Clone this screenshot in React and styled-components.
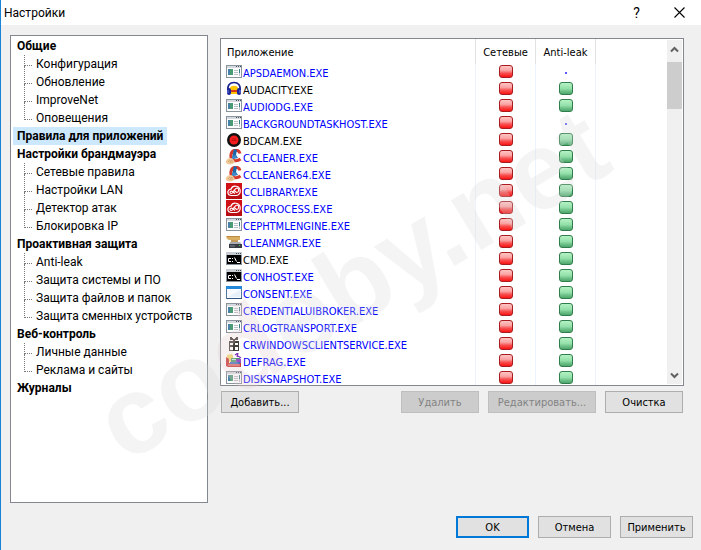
import React from 'react';
import styled, { createGlobalStyle, css } from 'styled-components';

const GlobalStyle = createGlobalStyle`
  * {
    box-sizing: border-box;
  }
  body {
    margin: 0;
    background: #f0f0f0;
  }
`;

const uiFont = 'Roboto, "Open Sans", sans-serif';
const smallFont = '"DejaVu Sans Condensed", "DejaVu Sans", sans-serif';

const Dialog = styled.div`
  position: relative;
  display: flex;
  flex-direction: column;
  height: 100vh;
  min-height: 400px;
  overflow: hidden;
  background: #f0f0f0;
  border-left: 1px solid #1883d7;
  color: #000;
  font-family: ${uiFont};
  font-size: 12px;
`;

const TitleBar = styled.header`
  display: flex;
  align-items: center;
  height: 25px;
  flex: none;
  padding-left: 3px;
  background: #fff;
`;

const Title = styled.h1`
  flex: 1;
  margin: 0;
  font-size: 12px;
  font-weight: 400;
`;

const TitleButton = styled.button`
  display: flex;
  align-items: center;
  justify-content: center;
  width: 43px;
  height: 25px;
  padding: 0;
  border: 0;
  background: none;
  font-family: ${uiFont};
  font-size: 14px;
`;

const Body = styled.main`
  display: flex;
  flex: 1;
  min-height: 0;
  gap: 12px;
  padding: 10px 17px 0 9px;
`;

const Tree = styled.nav`
  flex: none;
  width: 198px;
  padding: 1px 2px;
  background: #fff;
  border: 1px solid #828790;
`;

const List = styled.ul`
  margin: 0;
  padding: 0;
  list-style: none;
`;

const TreeLink = styled.a`
  display: inline-block;
  height: 18px;
  padding: 0 4px;
  line-height: 18px;
  color: #000;
  text-decoration: none;
  white-space: nowrap;
  vertical-align: top;
  ${({ $group }) => $group && css`font-weight: 700;`}
  ${({ $active }) => $active && css`background: #cce8ff;`}
`;

const Child = styled.li`
  display: flex;
  height: 18px;
  padding-left: 11px;
`;

const Group = styled.li`
  line-height: 18px;
`;

const Branch = styled.span`
  width: 8px;
  height: 18px;
  &::before,
  &::after {
    content: '';
    display: block;
    height: 10px;
    border-left: 1px dotted #777;
  }
  &::before {
    border-bottom: 1px dotted #777;
  }
  &::after {
    height: 8px;
    ${({ $last }) => $last && css`border-left: 0;`}
  }
`;

const Content = styled.section`
  display: flex;
  flex-direction: column;
  flex: 1;
  min-width: 0;
  padding: 3px 0 90px;
  font-family: ${smallFont};
  font-size: 11px;
`;

const ListBox = styled.div`
  display: flex;
  flex: 1;
  min-height: 0;
  background: #fff;
  border: 1px solid #828790;
  overflow: hidden;
`;

const TableWrap = styled.div`
  flex: 1;
  overflow: hidden;
`;

const Table = styled.table`
  width: 100%;
  table-layout: fixed;
  border-collapse: separate;
  border-spacing: 0;
`;

const HeadCell = styled.th`
  width: ${({ $width }) => $width || 'auto'};
  height: 25px;
  padding: ${({ $center }) => ($center ? '2px 0 0' : '2px 6px 0')};
  font-weight: 400;
  text-align: ${({ $center }) => ($center ? 'center' : 'left')};
  border-right: ${({ $width }) => ($width ? '1px solid #e2e2e2' : '0')};
`;

const Cell = styled.td`
  height: 17px;
  padding: 0;
  border-right: ${({ $last }) => ($last ? '0' : '1px solid #ebf4fe')};
`;

const AppName = styled.div`
  display: flex;
  gap: 1px;
  height: 17px;
  padding-left: 5px;
  line-height: 20px;
  color: ${({ $plain }) => ($plain ? '#000' : '#0000ff')};
  white-space: nowrap;
`;

const AppIcon = styled.svg`
  flex: none;
  width: 16px;
  height: 16px;
`;

const Status = styled.div`
  display: flex;
  align-items: center;
  justify-content: center;
  height: 17px;
`;

const Light = styled.span`
  width: 14px;
  height: 13px;
  margin-bottom: 2px;
  border: 1px solid ${({ $red }) => ($red ? '#a81c20' : '#2f7d4a')};
  border-radius: 3px;
  background: ${({ $red }) =>
    $red
      ? 'linear-gradient(#ffc4c4, #fba3a3 40%, #f85050 65%, #fa1414)'
      : 'linear-gradient(#b4f2c4, #94e0aa 50%, #6cc088 75%, #4ea76c)'};
`;

const Dot = styled.span`
  width: 2px;
  height: 2px;
  background: #5a5aff;
`;

const ScrollBar = styled.div`
  display: flex;
  flex-direction: column;
  flex: none;
  width: 15px;
  margin: 1px;
  background: #f0f0f0;
`;

const ScrollButton = styled.button`
  display: flex;
  align-items: center;
  justify-content: center;
  height: 18px;
  padding: 0;
  border: 0;
  background: none;
`;

const Track = styled.div`
  flex: 1;
  padding-top: 4px;
`;

const Thumb = styled.div`
  height: 47px;
  background: #cdcdcd;
`;

const Actions = styled.div`
  display: flex;
  gap: 9px;
  padding: 5px 1px 0;
`;

const Button = styled.button`
  width: ${({ $width }) => $width || '78px'};
  height: 22px;
  padding: 0;
  border: 1px solid #adadad;
  background: #e1e1e1;
  color: #000;
  font-family: ${smallFont};
  font-size: 11px;
  ${({ $default }) => $default && css`border: 2px solid #0078d7;`}
  ${({ $push }) => $push && css`margin-left: auto;`}
  &:disabled {
    border-color: #bfbfbf;
    background: #ccc;
    color: #838383;
  }
`;

const Footer = styled.footer`
  display: flex;
  flex: none;
  justify-content: flex-end;
  gap: 9px;
  padding: 13px 8px 12px;
`;

const Watermark = styled.div`
  position: absolute;
  left: 50%;
  top: 284px;
  transform: translate(-50%, -50%) rotate(-31deg);
  color: rgba(216, 216, 216, 0.28);
  font-family: 'Liberation Sans', sans-serif;
  font-size: 110px;
  font-weight: 700;
  line-height: 1;
  pointer-events: none;
  user-select: none;
`;

const Tinted = styled.span`
  color: rgba(226, 200, 204, 0.28);
`;

const WindowArt = () => (
  <>
    <rect x="0.5" y="1.5" width="15" height="12" fill="#fff" stroke="#8a929c" />
    <rect x="1" y="2" width="14" height="2" fill="#d5dae0" />
    <path d="M10 2h1v1h-1zM12 2h1v1h-1zM14 2h1v1h-1z" fill="#44525f" />
    <rect x="2" y="5" width="5" height="6" fill="#4b9b77" />
    <rect x="2" y="5" width="2" height="6" fill="#4682a8" />
    <path d="M8 6h4v1H8zM8 8h4v1H8zM8 10h4v1H8z" fill="#b9c0c7" />
    <rect x="13" y="5" width="1" height="4" fill="#337f86" />
    <rect x="13" y="9" width="1" height="3" fill="#b9c0c7" />
  </>
);

const AudacityArt = () => (
  <>
    <path d="M2 10C1 4 4 1.500 8 1.500S15 4 14 10" fill="none" stroke="#17208c" strokeWidth="1.600" />
    <path d="M4 7c1-3 7-3 8 0v6H4z" fill="#ffc400" />
    <path d="M4 9h8v2H4z" fill="#f06a10" />
    <path d="M4 10l1-1 1 2 1-2 1 2 1-2 1 2 1-2 1 1" fill="none" stroke="#c81818" strokeWidth="0.700" />
    <rect x="1" y="7" width="4" height="7" rx="2" fill="#1b249c" />
    <rect x="11" y="7" width="4" height="7" rx="2" fill="#1b249c" />
    <path d="M2 9v3M14 9v3" stroke="#7482df" />
  </>
);

const BandicamArt = () => (
  <>
    <circle cx="8" cy="8" r="7" fill="#111" />
    <circle cx="8" cy="8" r="4.500" fill="#f31d1d" />
    <path d="M5.500 8.500h5M6 7h4" stroke="#b01010" strokeWidth="0.800" />
  </>
);

const CCleanerArt = () => (
  <>
    <path d="M14 4.500C13 0 6 0 5 5.500c-1 6 5 8 9.500 4.500" fill="none" stroke="#d5392c" strokeWidth="3" />
    <path d="M8 0l3 1-1 5 2 3-6 1 1-6z" fill="#1b68a9" />
    <path d="M6 7l4-1 1 3-5 1z" fill="#3a89c6" />
    <path d="M0 12c1-3 5-4 7-2l2 3c-2 3-7 3-9 1z" fill="#f1c998" />
    <path d="M2 13l2-2M4 14l1-3M6 14V11" stroke="#c99a64" strokeWidth="0.700" />
  </>
);

const CreativeArt = () => (
  <>
    <rect width="16" height="16" fill="#d01217" />
    <path d="M0 11h16v5H0z" fill="#b80d12" />
    <path d="M5.500 12.500C1 12.500 0.500 6.500 5 6.200 6.500 1.500 14 2.500 14.200 8c.1 3-2 4.500-4.500 4.500z" fill="none" stroke="#fff" strokeWidth="1.200" />
    <path d="M9 10.500L6.500 8.500C4 7 3 10.500 5.500 10.500c2 0 3-5.500 5.500-5.500 2.500.2 2 4.500 0 4.500-1 0-2-1.500-3.500-2.500" fill="none" stroke="#fff" strokeWidth="1.100" />
  </>
);

const CleanArt = () => (
  <>
    <path d="M0 2h14v4H3L1 5z" fill="#d7ae62" />
    <path d="M1 2h13v1H1z" fill="#b88b40" />
    <path d="M5 6h7v3H5z" fill="#c39a58" />
    <path d="M4 8h10l2 3H3z" fill="#a9adb3" />
    <rect x="3" y="10" width="13" height="4" fill="#383c43" />
    <path d="M4 12h5" stroke="#7f868e" />
    <rect x="13" y="11" width="1" height="1" fill="#42d04d" />
  </>
);

const ConsoleArt = () => (
  <>
    <rect x="0.500" y="2.500" width="15" height="11" fill="#000" stroke="#8a929c" />
    <rect x="0" y="1" width="16" height="3" fill="#c6ccd2" />
    <path d="M10 2h1v1h-1zM12 2h1v1h-1zM14 2h1v1h-1z" fill="#44525f" />
    <path d="M5 7.500H2.500v3H5M6.500 7v1M6.500 10v1M8.500 6.500l2 4M11 11.500h3" fill="none" stroke="#fff" />
  </>
);

const ConsentArt = () => (
  <>
    <rect x="0.500" y="1.500" width="15" height="12" fill="#f7fbff" stroke="#55779f" />
    <rect x="0" y="1" width="16" height="3" fill="#2388da" />
    <path d="M1 13.500h15" stroke="#31537f" />
    <path d="M2 12L14 5v7z" fill="#e5f0f8" />
  </>
);

const GiftArt = () => (
  <>
    <path d="M4 1h2v1h1v1h2V2h1V1h2v3H9v1h4v10H3V5h4V4H4z" fill="#443e39" />
    <path d="M4 7h3v2H4zM9 7h3v2H9zM4 11h3v3H4zM9 11h3v3H9z" fill="#fff" />
  </>
);

const DefragArt = () => (
  <>
    <path d="M1 2l5-1 1 2v6H1z" fill="#f6d86a" />
    <path d="M9 2l3-2-1 4M12 3l3 2" stroke="#7d2bb5" strokeWidth="1.200" fill="none" />
    <path d="M5 5h9v5H5z" fill="#4a9b70" />
    <path d="M6 6h6v1H6z" fill="#c4f0d5" />
    <path d="M10 6h5v4h-5z" fill="#9853c6" />
    <path d="M0 4l3 2v4h12v4H2l-2-1z" fill="#c93636" />
    <path d="M4 9h10v2H4z" fill="#4874bd" />
    <path d="M2 12h12" stroke="#eda0a0" />
  </>
);

const art = {
  window: WindowArt,
  audacity: AudacityArt,
  bandicam: BandicamArt,
  ccleaner: CCleanerArt,
  creative: CreativeArt,
  clean: CleanArt,
  console: ConsoleArt,
  consent: ConsentArt,
  gift: GiftArt,
  defrag: DefragArt,
};

const groups = [
  { title: 'Общие', items: ['Конфигурация', 'Обновление', 'ImproveNet', 'Оповещения'] },
  { title: 'Правила для приложений', active: true, items: [] },
  { title: 'Настройки брандмауэра', items: ['Сетевые правила', 'Настройки LAN', 'Детектор атак', 'Блокировка IP'] },
  {
    title: 'Проактивная защита',
    items: ['Anti-leak', 'Защита системы и ПО', 'Защита файлов и папок', 'Защита сменных устройств'],
  },
  { title: 'Веб-контроль', items: ['Личные данные', 'Реклама и сайты'] },
  { title: 'Журналы', items: [] },
];

const apps = [
  { name: 'APSDAEMON.EXE', icon: 'window', noLeak: true },
  { name: 'AUDACITY.EXE', icon: 'audacity', plain: true },
  { name: 'AUDIODG.EXE', icon: 'window' },
  { name: 'BACKGROUNDTASKHOST.EXE', icon: 'window', noLeak: true },
  { name: 'BDCAM.EXE', icon: 'bandicam', plain: true },
  { name: 'CCLEANER.EXE', icon: 'ccleaner' },
  { name: 'CCLEANER64.EXE', icon: 'ccleaner' },
  { name: 'CCLIBRARY.EXE', icon: 'creative' },
  { name: 'CCXPROCESS.EXE', icon: 'creative' },
  { name: 'CEPHTMLENGINE.EXE', icon: 'window' },
  { name: 'CLEANMGR.EXE', icon: 'clean' },
  { name: 'CMD.EXE', icon: 'console', plain: true },
  { name: 'CONHOST.EXE', icon: 'console' },
  { name: 'CONSENT.EXE', icon: 'consent' },
  { name: 'CREDENTIALUIBROKER.EXE', icon: 'window' },
  { name: 'CRLOGTRANSPORT.EXE', icon: 'window' },
  { name: 'CRWINDOWSCLIENTSERVICE.EXE', icon: 'gift' },
  { name: 'DEFRAG.EXE', icon: 'defrag' },
  { name: 'DISKSNAPSHOT.EXE', icon: 'window' },
];

const AppRow = ({ app }) => {
  const Art = art[app.icon];
  return (
    <tr>
      <Cell>
        <AppName $plain={app.plain}>
          <AppIcon viewBox="0 0 16 16" aria-hidden="true">
            <Art />
          </AppIcon>
          {app.name}
        </AppName>
      </Cell>
      <Cell>
        <Status>
          <Light $red />
        </Status>
      </Cell>
      <Cell>
        <Status>{app.noLeak ? <Dot /> : <Light />}</Status>
      </Cell>
      <Cell $last />
    </tr>
  );
};

const Chevron = ({ down }) => (
  <svg width="9" height="7" viewBox="0 0 9 7" aria-hidden="true">
    <path d={down ? 'M1 1.500l3.500 3.500L8 1.500' : 'M1 5.500L4.500 2 8 5.500'} fill="none" stroke="#606060" strokeWidth="2" />
  </svg>
);

const App = () => {
  return (
    <>
      <GlobalStyle />
      <Dialog>
        <TitleBar>
          <Title>Настройки</Title>
          <TitleButton>?</TitleButton>
          <TitleButton aria-label="Закрыть">
            <svg width="11" height="11" viewBox="0 0 11 11" aria-hidden="true">
              <path d="M0.500 0.500l10 10M10.500 0.500l-10 10" stroke="#000" strokeWidth="1.100" />
            </svg>
          </TitleButton>
        </TitleBar>
        <Body>
          <Tree>
            <List>
              {groups.map((group) => (
                <Group key={group.title}>
                  <TreeLink href="#" $group $active={group.active}>
                    {group.title}
                  </TreeLink>
                  {group.items.length > 0 && (
                    <List>
                      {group.items.map((item, i) => (
                        <Child key={item}>
                          <Branch $last={i === group.items.length - 1} />
                          <TreeLink href="#">{item}</TreeLink>
                        </Child>
                      ))}
                    </List>
                  )}
                </Group>
              ))}
            </List>
          </Tree>
          <Content>
            <ListBox>
              <TableWrap>
                <Table>
                  <thead>
                    <tr>
                      <HeadCell $width="255px">Приложение</HeadCell>
                      <HeadCell $width="60px" $center>Сетевые</HeadCell>
                      <HeadCell $width="60px" $center>Anti-leak</HeadCell>
                      <HeadCell />
                    </tr>
                  </thead>
                  <tbody>
                    {apps.map((app) => (
                      <AppRow key={app.name} app={app} />
                    ))}
                  </tbody>
                </Table>
              </TableWrap>
              <ScrollBar>
                <ScrollButton aria-label="Вверх">
                  <Chevron />
                </ScrollButton>
                <Track>
                  <Thumb />
                </Track>
                <ScrollButton aria-label="Вниз">
                  <Chevron down />
                </ScrollButton>
              </ScrollBar>
            </ListBox>
            <Actions>
              <Button>Добавить...</Button>
              <Button $push disabled>Удалить</Button>
              <Button $width="108px" disabled>Редактировать...</Button>
              <Button>Очистка</Button>
            </Actions>
          </Content>
        </Body>
        <Footer>
          <Button $width="73px" $default>OK</Button>
          <Button $width="73px">Отмена</Button>
          <Button $width="73px">Применить</Button>
        </Footer>
        <Watermark aria-hidden="true">
          co<Tinted>d</Tinted>eby.net
        </Watermark>
      </Dialog>
    </>
  );
};

export default App;
